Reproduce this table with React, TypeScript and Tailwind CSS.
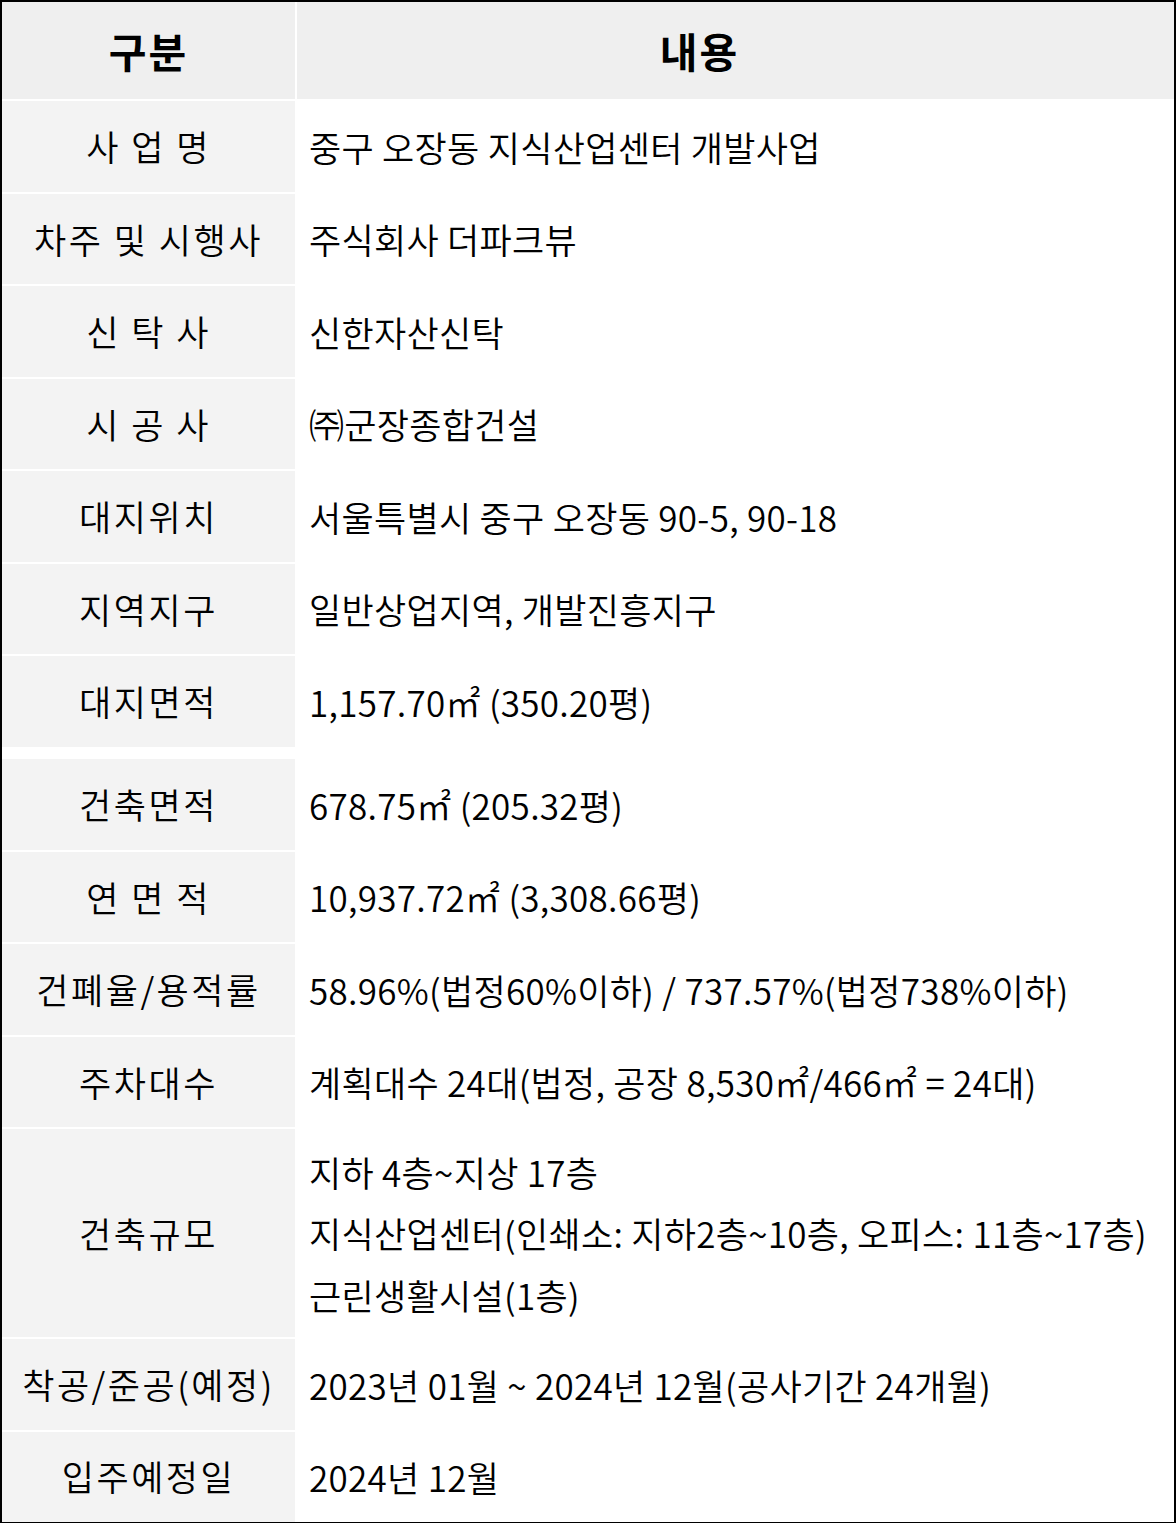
import React from "react";

type Row = { label: string; lines: string[]; h?: string; gap?: string };

const rows: Row[] = [
    { label: "사\u00a0업\u00a0명", lines: ["중구 오장동 지식산업센터 개발사업"] },
    { label: "차주 및 시행사", lines: ["주식회사 더파크뷰"] },
    { label: "신\u00a0탁\u00a0사", lines: ["신한자산신탁"] },
    { label: "시\u00a0공\u00a0사", lines: ["㈜군장종합건설"] },
    { label: "대지위치", lines: ["서울특별시 중구 오장동 90-5, 90-18"] },
    { label: "지역지구", lines: ["일반상업지역, 개발진흥지구"] },
    { label: "대지면적", lines: ["1,157.70㎡ (350.20평)"] },
    { label: "건축면적", lines: ["678.75㎡ (205.32평)"], gap: "mt-[12.5px]" },
    { label: "연\u00a0면\u00a0적", lines: ["10,937.72㎡ (3,308.66평)"] },
    { label: "건폐율/용적률", lines: ["58.96%(법정60%이하) / 737.57%(법정738%이하)"] },
    { label: "주차대수", lines: ["계획대수 24대(법정, 공장 8,530㎡/466㎡ = 24대)"] },
    {
        label: "건축규모",
        lines: ["지하 4층~지상 17층", "지식산업센터(인쇄소: 지하2층~10층, 오피스: 11층~17층)", "근린생활시설(1층)"],
        h: "h-[208px]",
    },
    { label: "착공/준공(예정)", lines: ["2023년 01월 ~ 2024년 12월(공사기간 24개월)"] },
    { label: "입주예정일", lines: ["2024년 12월"], h: "h-[90px]" },
];

export default function App() {
    return (
        <div className="w-[1176px] border-2 border-black bg-white text-black font-['Noto_Sans_CJK_KR',sans-serif]">
            <div className="flex h-[97px] gap-[2px] text-[41px] font-bold tracking-[2px]">
                <div className="w-[293px] shrink-0 bg-[#efefef] flex items-center justify-center">구분</div>
                <div className="flex-1 bg-[#efefef] flex items-center justify-center pr-[72px]">내용</div>
            </div>

            {rows.map((r, i) => (
                <div key={i} className={`flex ${r.h ?? "h-[90.5px]"} ${r.gap ?? "mt-[2px]"} text-[35px] font-[350]`}>
                    <div className="w-[293px] shrink-0 bg-[#f3f3f3] flex items-center justify-center whitespace-nowrap tracking-[2.5px]">
                        {r.label}
                    </div>
                    <div className="flex-1 flex flex-col justify-center pl-[14px] leading-[61.5px] whitespace-nowrap tracking-[0.3px]">
                        {r.lines.map((l, j) => (
                            <div key={j}>{l}</div>
                        ))}
                    </div>
                </div>
            ))}
        </div>
    );
}
